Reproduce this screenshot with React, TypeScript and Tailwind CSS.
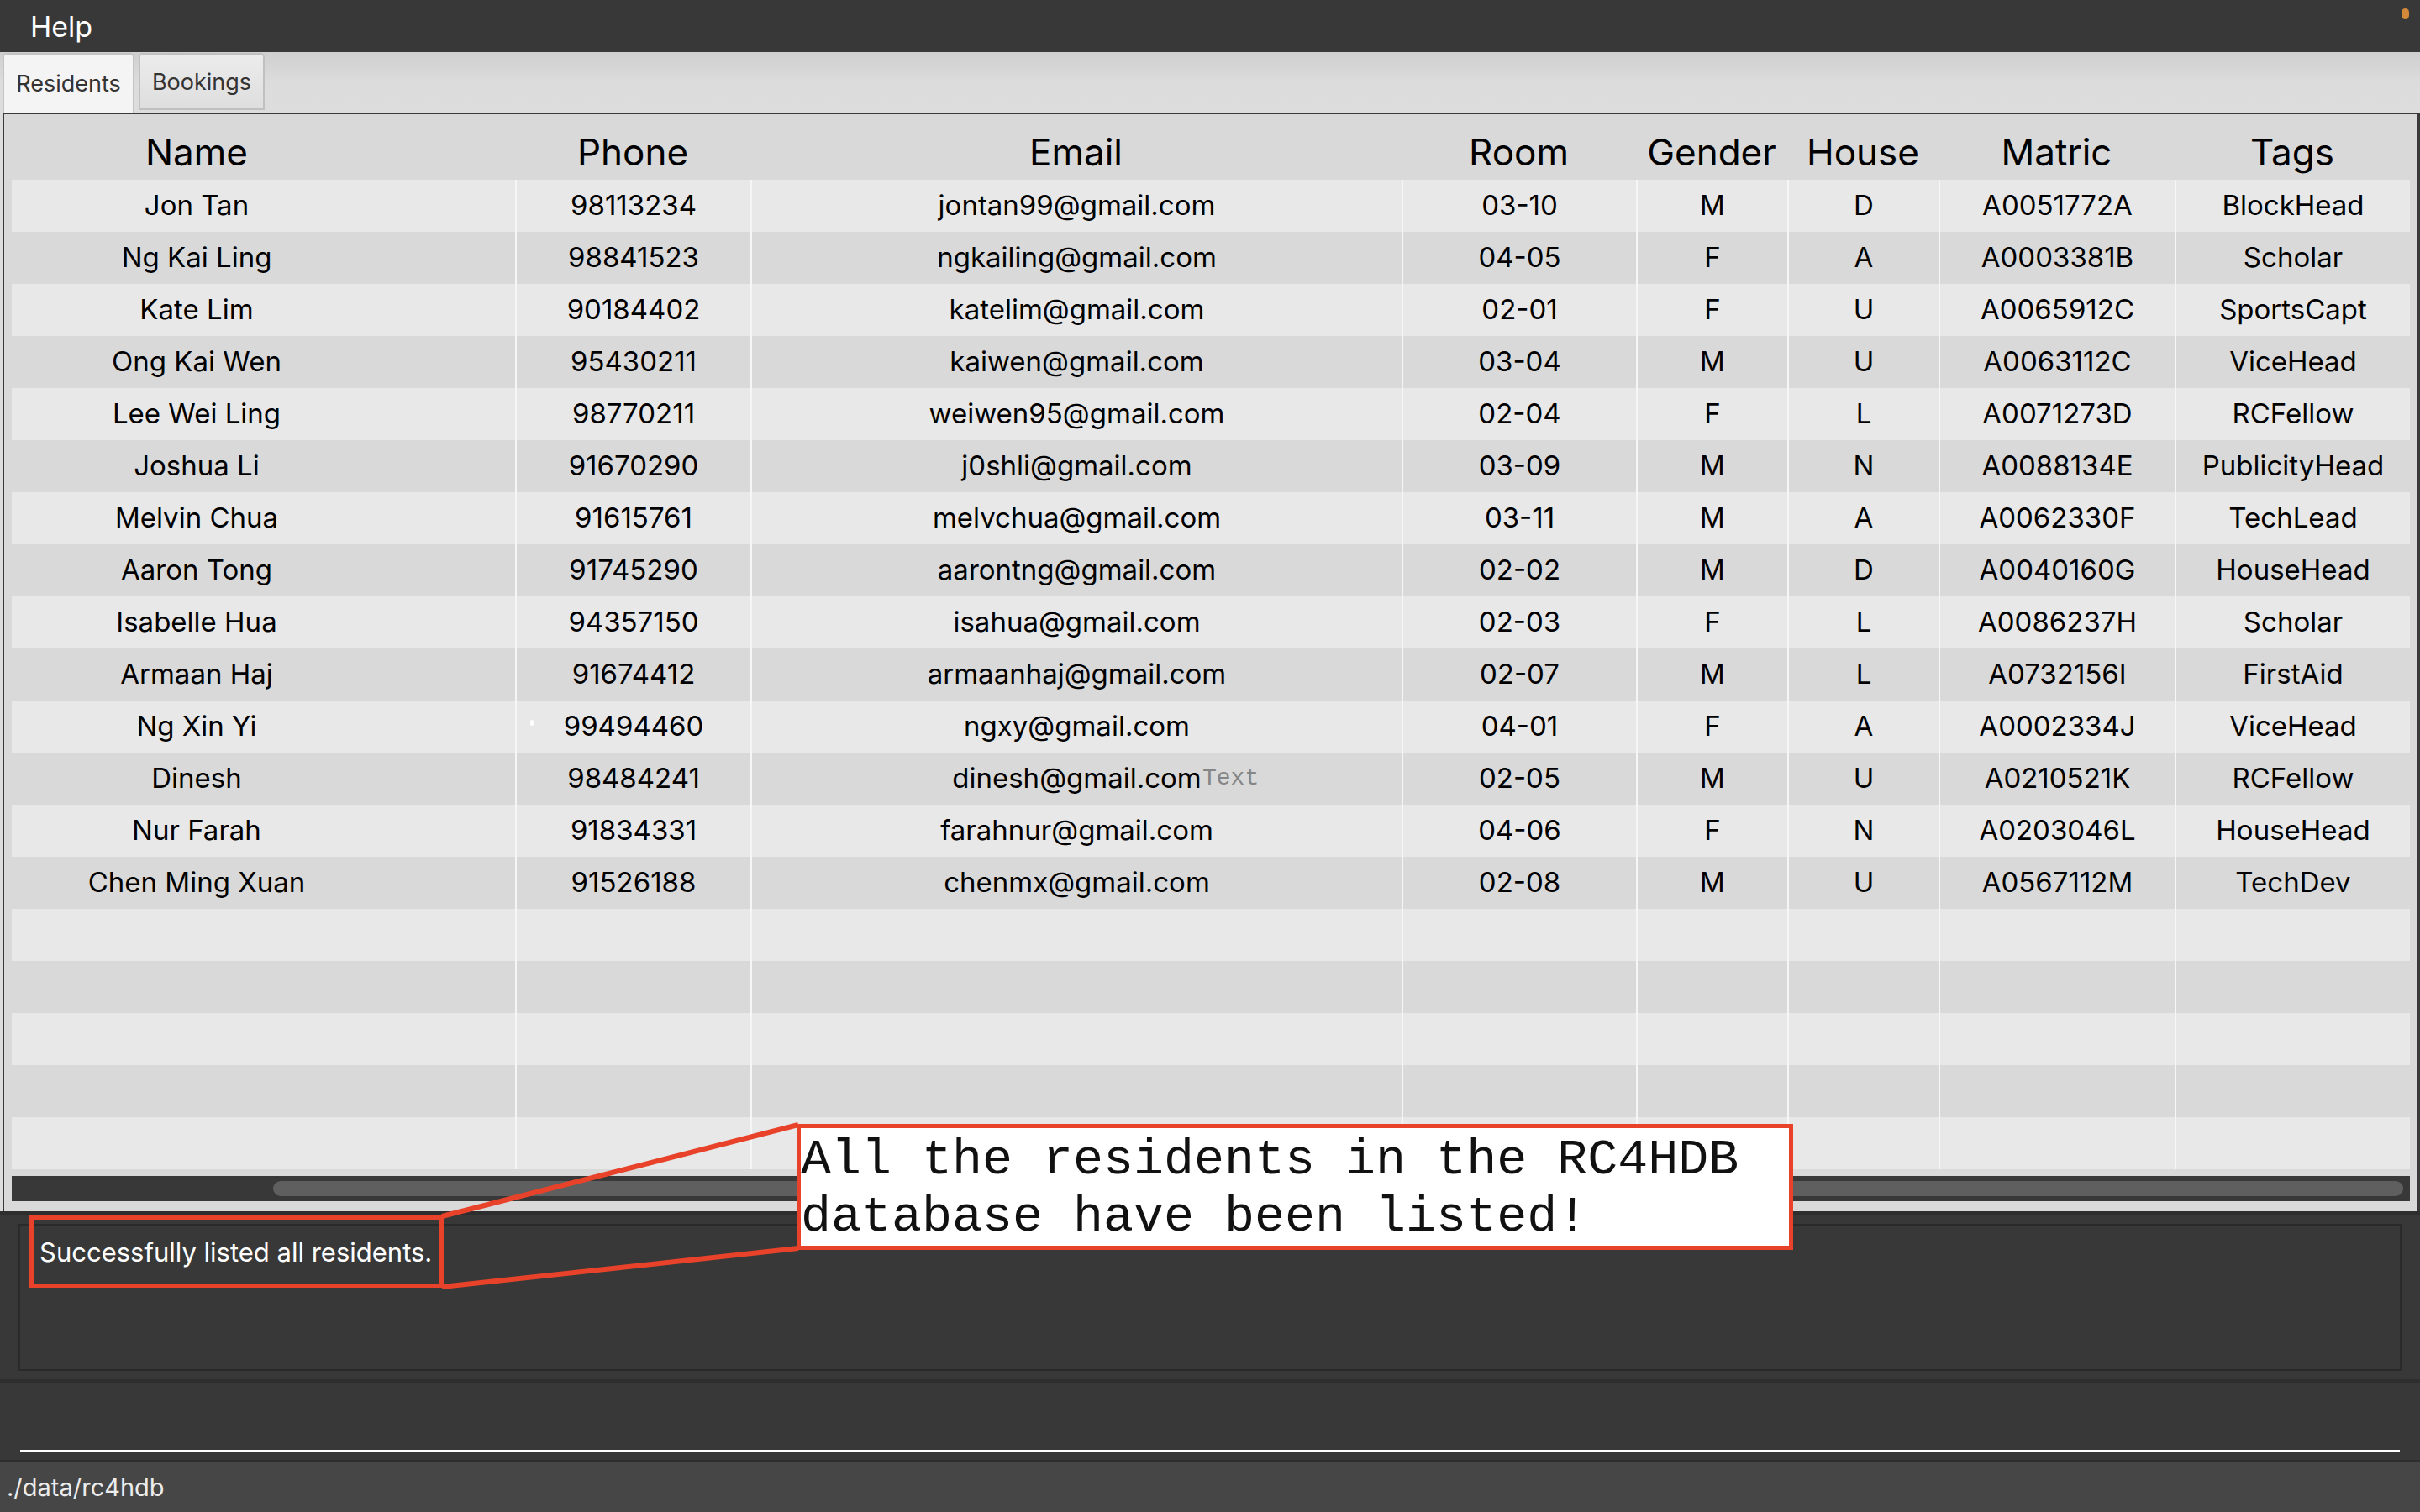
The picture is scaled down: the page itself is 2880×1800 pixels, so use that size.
import React from 'react';

interface Resident {
  name: string;
  phone: string;
  email: string;
  room: string;
  gender: string;
  house: string;
  matric: string;
  tag: string;
}

const residents: Resident[] = [
  { name: 'Jon Tan', phone: '98113234', email: 'jontan99@gmail.com', room: '03-10', gender: 'M', house: 'D', matric: 'A0051772A', tag: 'BlockHead' },
  { name: 'Ng Kai Ling', phone: '98841523', email: 'ngkailing@gmail.com', room: '04-05', gender: 'F', house: 'A', matric: 'A0003381B', tag: 'Scholar' },
  { name: 'Kate Lim', phone: '90184402', email: 'katelim@gmail.com', room: '02-01', gender: 'F', house: 'U', matric: 'A0065912C', tag: 'SportsCapt' },
  { name: 'Ong Kai Wen', phone: '95430211', email: 'kaiwen@gmail.com', room: '03-04', gender: 'M', house: 'U', matric: 'A0063112C', tag: 'ViceHead' },
  { name: 'Lee Wei Ling', phone: '98770211', email: 'weiwen95@gmail.com', room: '02-04', gender: 'F', house: 'L', matric: 'A0071273D', tag: 'RCFellow' },
  { name: 'Joshua Li', phone: '91670290', email: 'j0shli@gmail.com', room: '03-09', gender: 'M', house: 'N', matric: 'A0088134E', tag: 'PublicityHead' },
  { name: 'Melvin Chua', phone: '91615761', email: 'melvchua@gmail.com', room: '03-11', gender: 'M', house: 'A', matric: 'A0062330F', tag: 'TechLead' },
  { name: 'Aaron Tong', phone: '91745290', email: 'aarontng@gmail.com', room: '02-02', gender: 'M', house: 'D', matric: 'A0040160G', tag: 'HouseHead' },
  { name: 'Isabelle Hua', phone: '94357150', email: 'isahua@gmail.com', room: '02-03', gender: 'F', house: 'L', matric: 'A0086237H', tag: 'Scholar' },
  { name: 'Armaan Haj', phone: '91674412', email: 'armaanhaj@gmail.com', room: '02-07', gender: 'M', house: 'L', matric: 'A0732156I', tag: 'FirstAid' },
  { name: 'Ng Xin Yi', phone: '99494460', email: 'ngxy@gmail.com', room: '04-01', gender: 'F', house: 'A', matric: 'A0002334J', tag: 'ViceHead' },
  { name: 'Dinesh', phone: '98484241', email: 'dinesh@gmail.com', room: '02-05', gender: 'M', house: 'U', matric: 'A0210521K', tag: 'RCFellow' },
  { name: 'Nur Farah', phone: '91834331', email: 'farahnur@gmail.com', room: '04-06', gender: 'F', house: 'N', matric: 'A0203046L', tag: 'HouseHead' },
  { name: 'Chen Ming Xuan', phone: '91526188', email: 'chenmx@gmail.com', room: '02-08', gender: 'M', house: 'U', matric: 'A0567112M', tag: 'TechDev' },
];

const headers = ['Name', 'Phone', 'Email', 'Room', 'Gender', 'House', 'Matric', 'Tags'];

const cols = 'grid grid-cols-[599px_280px_775px_279px_180px_180px_281px_280px]';

function Row({ r, index }: { r?: Resident; index: number }) {
  const bg = index % 2 === 0 ? 'bg-[#e8e8e8]' : 'bg-[#d9d9d9]';
  const cells = r ? [r.phone, r.email, r.room, r.gender, r.house, r.matric, r.tag] : ['', '', '', '', '', '', ''];
  return (
    <div className={`${cols} h-[62px] ${bg} text-[33px] text-black`}>
      <div className="flex items-center justify-center pr-[159px]">{r?.name}</div>
      {cells.map((c, i) => (
        <div key={i} className="flex items-center justify-center border-l-2 border-[#f6f6f6]">
          {c}
        </div>
      ))}
    </div>
  );
}

export default function App() {
  const empty = [0, 1, 2, 3, 4];

  return (
    <div className="relative w-[2880px] h-[1800px] overflow-hidden flex flex-col bg-[#383838] font-['Inter','Liberation_Sans',sans-serif]">
      {/* menu bar */}
      <div className="h-[62px] shrink-0 flex items-center pl-[36px] bg-[#383838] text-white text-[34px]">
        Help
      </div>
      <span className="absolute left-[2858px] top-[10px] w-[9px] h-[13px] rounded-full bg-[#d4883a]" />

      {/* tabs */}
      <div className="h-[72px] shrink-0 flex items-start gap-[5px] pl-[3px] pt-[1px] bg-gradient-to-b from-[#cfcfcf] via-[#dcdcdc] to-[#dddddd]">
        <div className="h-[71px] w-[157px] flex items-center justify-center pt-[2px] rounded-t-[5px] border-2 border-b-0 border-[#c4c4c4] bg-[#f4f4f4] text-[27px] text-[#333]">
          Residents
        </div>
        <div className="h-[68px] w-[150px] flex items-center justify-center pt-[2px] rounded-t-[5px] border-2 border-[#c0c0c0] bg-gradient-to-b from-[#ececec] to-[#dedede] text-[27px] text-[#333]">
          Bookings
        </div>
      </div>

      {/* table panel */}
      <div className="shrink-0 bg-[#dcdcdc] pl-[3px]">
        <div className="h-[1308px] flex flex-col border-l-2 border-t-2 border-r-[3px] border-[#3a3a3a] bg-[#d9d9d9] px-[9px]">
          <div className={`${cols} h-[78px] text-[44px] text-black`}>
            {headers.map((h, i) => (
              <div key={h} className={`flex items-center justify-center pt-[12px] ${i === 0 ? 'pr-[159px]' : ''}`}>
                {h}
              </div>
            ))}
          </div>
          {residents.map((r, i) => (
            <Row key={r.matric} r={r} index={i} />
          ))}
          {empty.map((e) => (
            <Row key={e} index={residents.length + e} />
          ))}
          <div className="mt-[8px] h-[30px] flex pl-[311px] pr-[8px] py-[6px] bg-[#383838]">
            <div className="flex-1 rounded-full bg-[#5f5f5f]" />
          </div>
        </div>
      </div>

      <div className="h-[4px] shrink-0 bg-[#2e2e2e]" />

      {/* result display */}
      <div className="h-[196px] shrink-0 pt-[11px] px-[22px] pb-[10px]">
        <div className="h-full border-2 border-[#2a2a2a] pl-[23px] pt-[9px] text-[31px] text-white">
          Successfully listed all residents.
        </div>
      </div>

      <div className="h-[4px] shrink-0 bg-[#2e2e2e]" />

      {/* command box */}
      <div className="h-[92px] shrink-0 flex items-end px-[24px] pb-[10px]">
        <div className="w-full h-[2px] bg-white" />
      </div>

      <div className="h-[2px] shrink-0 bg-[#2e2e2e]" />

      {/* status bar */}
      <div className="flex-1 flex items-center pl-[8px] pt-[2px] bg-[#464646] text-[29px] text-[#ececec]">
        ./data/rc4hdb
      </div>

      {/* stray marks on the capture */}
      <span className="absolute left-[1431px] top-[906px] font-['Liberation_Mono',monospace] text-[28px] text-[#858585]">
        Text
      </span>
      <span className="absolute left-[631px] top-[857px] w-[4px] h-[7px] rounded-full bg-white" />

      {/* annotation */}
      <svg className="absolute inset-0 pointer-events-none" width="2880" height="1800">
        <rect x="37.5" y="1449.5" width="488" height="81" fill="none" stroke="#e8432a" strokeWidth="5" />
        <line x1="526" y1="1448" x2="950" y2="1339" stroke="#e8432a" strokeWidth="6" />
        <line x1="526" y1="1532" x2="950" y2="1486" stroke="#e8432a" strokeWidth="6" />
      </svg>
      <div className="absolute left-[948px] top-[1338px] w-[1186px] h-[150px] border-[5px] border-[#e8432a] bg-white pt-[4px] font-['Liberation_Mono',monospace] text-[60px] leading-[68px] text-[#111] whitespace-pre">
        {'All the residents in the RC4HDB\ndatabase have been listed!'}
      </div>
    </div>
  );
}
